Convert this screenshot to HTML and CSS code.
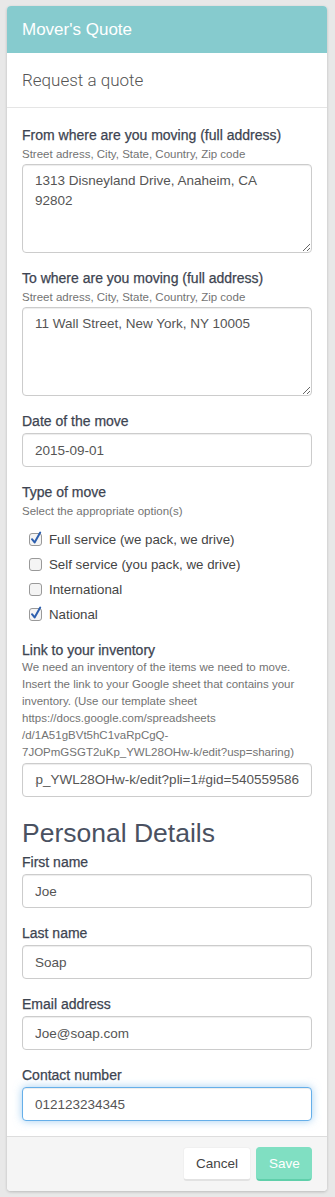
FILE: index.html
```html
<!DOCTYPE html>
<html lang="en">
	<head>
		<meta charset="UTF-8" />
		<meta name="viewport" content="width=device-width, initial-scale=1.0" />
		<title>Mover's Quote</title>
		<link rel="stylesheet" href="styles.css">
	</head>
	<body>
		<div class="panel">
			<div class="panel-heading">Mover's Quote</div>
			<div class="panel-title">Request a quote</div>

			<form class="panel-body">
				<div class="form-group">
					<label class="control-label" for="from_address">From where are you moving (full address)</label>
					<p class="help-block">Street adress, City, State, Country, Zip code</p>
					<textarea id="from_address" class="form-control" rows="4">1313 Disneyland Drive, Anaheim, CA 92802</textarea>
				</div>

				<div class="form-group">
					<label class="control-label" for="to_address">To where are you moving (full address)</label>
					<p class="help-block">Street adress, City, State, Country, Zip code</p>
					<textarea id="to_address" class="form-control" rows="4">11 Wall Street, New York, NY 10005</textarea>
				</div>

				<div class="form-group">
					<label class="control-label" for="move_date">Date of the move</label>
					<input id="move_date" class="form-control" type="text" value="2015-09-01" />
				</div>

				<div class="form-group">
					<label class="control-label">Type of move</label>
					<p class="help-block">Select the appropriate option(s)</p>
					<div class="checkbox-list">
						<label class="checkbox">
							<svg class="check-box" width="14" height="15" viewBox="0 0 14 15">
								<rect x="0.5" y="2.5" width="12" height="12" rx="2.5" class="box" />
								<path d="M3 8.2 L5.6 11.4 L11.2 1.6" class="tick" />
							</svg>
							Full service (we pack, we drive)
						</label>
						<label class="checkbox">
							<svg class="check-box" width="14" height="15" viewBox="0 0 14 15">
								<rect x="0.5" y="2.5" width="12" height="12" rx="2.5" class="box" />
							</svg>
							Self service (you pack, we drive)
						</label>
						<label class="checkbox">
							<svg class="check-box" width="14" height="15" viewBox="0 0 14 15">
								<rect x="0.5" y="2.5" width="12" height="12" rx="2.5" class="box" />
							</svg>
							International
						</label>
						<label class="checkbox">
							<svg class="check-box" width="14" height="15" viewBox="0 0 14 15">
								<rect x="0.5" y="2.5" width="12" height="12" rx="2.5" class="box" />
								<path d="M3 8.2 L5.6 11.4 L11.2 1.6" class="tick" />
							</svg>
							National
						</label>
					</div>
				</div>

				<div class="form-group">
					<label class="control-label">Link to your inventory</label>
					<p class="help-block help-long">
						We need an inventory of the items we need to move.<br>
						Insert the link to your Google sheet that contains your<br>
						inventory. (Use our template sheet<br>
						https://docs.google.com/spreadsheets<br>
						/d/1A51gBVt5hC1vaRpCgQ-<br>
						7JOPmGSGT2uKp_YWL28OHw-k/edit?usp=sharing)
					</p>
					<div class="form-control scrolled">
						<div class="scrolled-inner">
							<span>https://docs.google.com/spreadsheets/d/1A51gBVt5hC1vaRpCgQ-7JOPmGSGT2uKp_YWL28OHw-k/edit?pli=1#gid=540559586</span>
						</div>
					</div>
				</div>

				<h3 class="section-title">Personal Details</h3>

				<div class="form-group">
					<label class="control-label" for="first_name">First name</label>
					<input id="first_name" class="form-control" type="text" value="Joe" />
				</div>

				<div class="form-group">
					<label class="control-label" for="last_name">Last name</label>
					<input id="last_name" class="form-control" type="text" value="Soap" />
				</div>

				<div class="form-group">
					<label class="control-label" for="email">Email address</label>
					<input id="email" class="form-control" type="text" value="Joe@soap.com" />
				</div>

				<div class="form-group">
					<label class="control-label" for="contact">Contact number</label>
					<input id="contact" class="form-control focused" type="text" value="012123234345" />
				</div>
			</form>

			<div class="panel-footer">
				<button type="button" class="btn btn-default">Cancel</button>
				<button type="button" class="btn btn-save">Save</button>
			</div>
		</div>
	</body>
</html>
```

FILE: styles.css
```css
body {
	margin: 0;
	padding: 6px 8px 6px 7px;
	font-family: 'Liberation Sans', Arial, sans-serif;
	background-color: #e8e8e8;
}

.panel {
	width: 320px;
	background-color: #fff;
	border-radius: 4px;
	box-shadow: 0 1px 3px rgba(0, 0, 0, 0.2);
	overflow: hidden;
}

.panel-heading {
	padding: 10px 15px;
	line-height: 27px;
	font-size: 17px;
	color: #fff;
	background-color: #86cbce;
}

.panel-title {
	padding: 15px 15px;
	line-height: 24px;
	font-family: 'Roboto', sans-serif;
	font-weight: 300;
	font-size: 17px;
	color: #555;
	border-bottom: 1px solid #e5e5e5;
}

.panel-body {
	display: flex;
	flex-direction: column;
	padding: 17px 15px 0;
}

.form-group {
	display: flex;
	flex-direction: column;
	margin-bottom: 15px;
}

.control-label {
	display: block;
	margin-bottom: 2px;
	line-height: 20px;
	font-size: 14px;
	color: #3d4451;
	-webkit-text-stroke: 0.25px #3d4451;
}

.help-block {
	margin: 0 0 2px;
	line-height: 15px;
	font-size: 11.5px;
	color: #737373;
}

.help-long {
	margin-top: -3px;
	line-height: 17px;
}

.form-control {
	box-sizing: border-box;
	width: 100%;
	height: 34px;
	margin: 0;
	padding: 6px 12px;
	font-family: 'Liberation Sans', Arial, sans-serif;
	font-size: 13.5px;
	line-height: 20px;
	color: #555;
	background-color: #fff;
	border: 1px solid #ccc;
	border-radius: 4px;
	box-shadow: inset 0 1px 1px rgba(0, 0, 0, 0.075);
	outline: none;
}

textarea.form-control {
	height: 89px;
	padding-right: 18px;
	resize: vertical;
}

.form-control.focused {
	border-color: #66afe9;
	box-shadow: inset 0 1px 1px rgba(0, 0, 0, 0.075), 0 0 8px rgba(102, 175, 233, 0.6);
}

.scrolled-inner {
	display: flex;
	justify-content: flex-end;
	overflow: hidden;
	white-space: nowrap;
}

.checkbox-list {
	display: flex;
	flex-direction: column;
	gap: 5px;
	padding: 9px 0 0 7px;
}

.checkbox {
	display: flex;
	align-items: center;
	gap: 6px;
	line-height: 20px;
	font-size: 13.3px;
	color: #444;
}

.check-box {
	margin-top: -3px;
}

.check-box .box {
	fill: #f4f4f4;
	stroke: #999;
	stroke-width: 1;
}

.check-box .tick {
	fill: none;
	stroke: #2d5fae;
	stroke-width: 2;
	stroke-linecap: round;
	stroke-linejoin: round;
}

.section-title {
	margin: 7px 0 4px;
	line-height: 29px;
	font-size: 26.5px;
	font-weight: 400;
	color: #4a5161;
}

.panel-footer {
	display: flex;
	justify-content: flex-end;
	gap: 5px;
	padding: 10px 15px 10px;
	background-color: #f5f5f5;
	border-top: 1px solid #ddd;
}

.btn {
	height: 34px;
	padding: 0 12px;
	font-family: 'Liberation Sans', Arial, sans-serif;
	font-size: 13.5px;
	border-radius: 4px;
	cursor: pointer;
}

.btn-default {
	color: #444;
	background-color: #fff;
	border: 1px solid #f0f0f0;
	border-bottom: 2px solid #e2e2e2;
}

.btn-save {
	width: 56px;
	color: #fff;
	background-color: #80dfc2;
	border: 1px solid #80dfc2;
	border-bottom: 2px solid #5fcfaa;
}
```
